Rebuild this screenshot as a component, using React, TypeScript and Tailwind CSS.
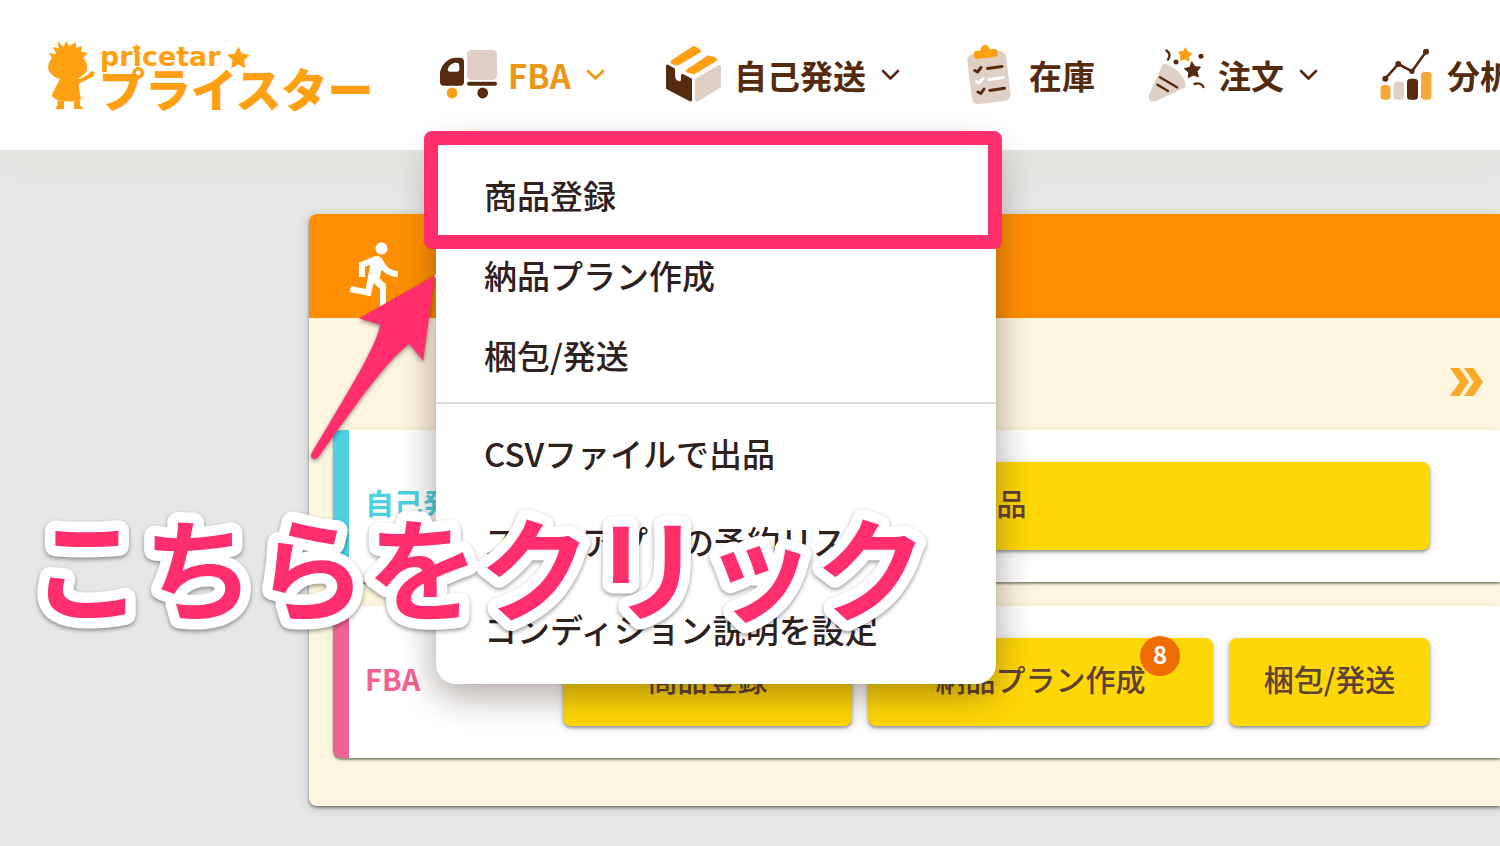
import type { ReactNode } from "react";
import { MdDirectionsRun } from "react-icons/md";

function starPoints(cx: number, cy: number, r: number, inner = 0.45, turn = 0) {
  return Array.from({ length: 10 }, (_, i) => {
    const radius = i % 2 === 0 ? r : r * inner;
    const angle = -Math.PI / 2 + (i * Math.PI) / 5 + turn;
    return `${(cx + radius * Math.cos(angle)).toFixed(2)},${(cy + radius * Math.sin(angle)).toFixed(2)}`;
  }).join(" ");
}

function Logo() {
  return (
    <svg width="330" height="76" viewBox="0 0 330 76" fill="#ff9f12" className="overflow-visible" role="img" aria-label="プライスター">
      <polygon points="4,16 11.7,17.3 7.7,10 13.7,11.3 12.7,4.3 18.3,9.7 21.7,4 24,9.3 30.7,5 31.3,10.7 37,9.3 36,14.7 42.7,15.7 38.3,20.7 41.7,27 4,27 6.7,20.7" />
      <ellipse cx="22.7" cy="30" rx="19.6" ry="13.2" />
      <path d="M15 41H31L35 42 44 37 45.5 34 49.5 35 48.5 39.5 35 46 33.5 48 36 62.5C32 65 20 65 11.5 62.7L15.5 54 12.5 60 12 63 7 59.5 7.5 56 13 46Z" />
      <path d="M12.5 63.5 19 64.3V72H13C9.500 72 10 69.500 12.500 69.300ZM29 64.300 35 63.300V69C38.500 69.500 38.500 72 36 72H29Z" />
      <polygon points={starPoints(91.3, 11.5, 4.8)} />
      <polygon points={starPoints(193.3, 21.5, 12, 0.5)} />
      <text x="55" y="29" fontSize="27" fontWeight="700" fontFamily="DejaVu Sans, sans-serif">pricetar</text>
      <text x="54" y="70" fontSize="46" fontWeight="900" fontFamily="Noto Sans CJK JP, sans-serif">プライスター</text>
    </svg>
  );
}

function TruckIcon() {
  return (
    <svg width="64" height="64" viewBox="-2 -5 64 64" aria-hidden="true">
      <rect x="29" y="2" width="30" height="30" rx="4.500" fill="#e0cfc5" />
      <rect x="29" y="33.700" width="30" height="4" rx="2" fill="#562a0d" />
      <path fillRule="evenodd" fill="#562a0d" d="M2 24C4 16 10 9.700 18 9.700H22A4 4 0 0 1 26 13.700V33.700A4 4 0 0 1 22 37.700H6A4 4 0 0 1 2 33.700ZM9.700 21.500C10 23.500 11 23.700 12 23.700H18.500C20.500 23.700 21.300 23 21.300 21.500V17.500C21.300 15.500 20.500 14.700 18.500 14.700C14 14.700 11 17 9.700 21.500Z" />
      <circle cx="14" cy="45" r="5.400" fill="#ff9f12" />
      <circle cx="44.700" cy="45" r="5.400" fill="#562a0d" />
    </svg>
  );
}

function BoxIcon() {
  return (
    <svg width="64" height="64" viewBox="0 0 64 64" strokeLinejoin="round" strokeWidth="4" aria-hidden="true">
      <g fill="#ff9f12" stroke="#ff9f12">
        <path d="M10.500 19 32 5 37 8 15.300 20.500Z" />
        <path d="M26 27.800 46.500 14.300 53 16.500 32 29.200Z" />
      </g>
      <path fill="#562a0d" stroke="#562a0d" strokeWidth="3" d="M5.500 23 11.500 26.500 11.800 35C12.500 39.500 20 42 20.500 37V32.500L28.500 36.500V57L5.500 45Z" />
      <path fill="#e0cfc5" stroke="#e0cfc5" d="M35 37 57 24V43L35 56.500Z" />
    </svg>
  );
}

function ClipboardIcon() {
  return (
    <svg width="64" height="64" viewBox="0 0 64 64" fill="none" strokeLinecap="round" strokeLinejoin="round" strokeWidth="3" aria-hidden="true">
      <rect x="12.500" y="9.500" width="39" height="50" rx="6" fill="#e0cfc5" transform="rotate(-7 32 34.300)" />
      <g fill="#ff9f12" transform="rotate(-6 28.700 11)">
        <rect x="16.800" y="7" width="24" height="8" rx="3" />
        <circle cx="28.500" cy="6.500" r="4.500" />
      </g>
      <path stroke="#562a0d" d="M30.500 25.400 45 23.400M17.800 27.500 20.500 29 24 24.500M32.800 47.400 47.500 45.300M21 49 23.800 50.500 27 46" />
      <path stroke="#fff" d="M31.800 36.600 46.500 34.500M19 38.700 22 40 26 35.500" />
    </svg>
  );
}

function PartyIcon() {
  return (
    <svg width="60" height="64" viewBox="0 0 60 64" className="overflow-visible" fill="none" strokeLinecap="round" strokeWidth="2.400" aria-hidden="true">
      <path fill="#e0cfc5" d="M12 22.500C13 20 15 20.500 18 22 27 26 34 33.500 35.700 41.500 36 44 35 44.500 33 45.500L6 58C1 60-3 56.500-.500 51Z" />
      <path stroke="#562a0d" d="M10 34.300 27 44.300M7.500 41.800 18 48" />
      <polygon fill="#ff9f12" points={starPoints(35, 12, 7, 0.58, 0.1)} stroke="#ff9f12" strokeWidth="1" strokeLinejoin="round" />
      <polygon fill="#562a0d" points={starPoints(42.7, 27.500, 8.500, 0.52, -0.1)} stroke="#562a0d" strokeWidth="1" strokeLinejoin="round" />
      <circle cx="26" cy="19" r="2.500" fill="#562a0d" />
      <circle cx="51" cy="13.300" r="2.500" fill="#562a0d" />
      <path stroke="#562a0d" d="M16.500 7.500C20 10 20.500 13.500 18 16.500M44.500 41C48.500 39.500 52 41 53.500 44" />
    </svg>
  );
}

function ChartIcon() {
  return (
    <svg width="64" height="64" viewBox="0 0 64 64" aria-hidden="true">
      <rect x="5.500" y="42" width="10" height="14.700" rx="3.500" fill="#f4a93a" />
      <rect x="18.500" y="38.700" width="10.500" height="18" rx="3.500" fill="#e0cfc5" />
      <rect x="32" y="35.700" width="11" height="21" rx="3.500" fill="#562a0d" />
      <rect x="46" y="29" width="10.500" height="27.700" rx="3.500" fill="#f4a93a" />
      <path d="M10.300 35.700 23.300 21 37 28.300 51 8.700" fill="none" stroke="#562a0d" strokeWidth="2.600" strokeLinejoin="round" />
      <g fill="#562a0d">
        <circle cx="10.300" cy="35.700" r="3" />
        <circle cx="23.300" cy="21" r="3" />
        <circle cx="37" cy="28.300" r="2.600" />
        <circle cx="51" cy="8.700" r="3" />
      </g>
    </svg>
  );
}

function Chevron() {
  return (
    <svg width="24" height="24" viewBox="0 0 24 24" fill="none" stroke="currentColor" strokeWidth="2.600" strokeLinecap="round" strokeLinejoin="round" aria-hidden="true" className="ml-3">
      <path d="M5 8 12.500 15.500 20 8" />
    </svg>
  );
}

function NavItem({ icon, label, chevron, active, children }: { icon: ReactNode; label: string; chevron?: boolean; active?: boolean; children?: ReactNode }) {
  return (
    <li className="relative flex shrink-0 items-center">
      <button type="button" className={`flex items-center text-[33px] leading-none font-bold whitespace-nowrap ${active ? "text-[#ec9516]" : "text-[#562a0d]"}`}>
        <span className="mr-2">{icon}</span>
        <span>{label}</span>
        {chevron && <Chevron />}
      </button>
      {children}
    </li>
  );
}

const registerLinks = ["商品登録", "納品プラン作成", "梱包/発送"];
const settingLinks = ["CSVファイルで出品", "スマホアプリの予約リスト", "コンディション説明を設定"];

function FbaMenu() {
  return (
    <div className="absolute top-[140px] left-0 z-20 w-[560px] rounded-[20px] bg-white text-[33px] font-medium text-[#2e211e] shadow-[0_10px_36px_rgba(50,30,20,0.42)]">
      <ul className="border-b-2 border-[#dfdddb] pt-4 pb-[6px]">
        {registerLinks.map((t) => (
          <li key={t}>
            <a href="#" className="flex h-20 items-center px-12">{t}</a>
          </li>
        ))}
      </ul>
      <ul className="pt-[6px] pb-[10px]">
        {settingLinks.map((t) => (
          <li key={t}>
            <a href="#" className="flex h-[88px] items-center px-12">{t}</a>
          </li>
        ))}
      </ul>
    </div>
  );
}

function Task({ label, badge }: { label: string; badge?: number }) {
  return (
    <button type="button" className="relative h-[88px] rounded-lg bg-[#fed706] pb-2 text-[30px] leading-none font-medium whitespace-nowrap text-[#5d4037] shadow-[0_2px_3px_rgba(0,0,0,0.35),0_2px_10px_rgba(0,0,0,0.14)]">
      {label}
      {badge !== undefined && (
        <span className="absolute -top-[2px] right-[33px] flex size-10 items-center justify-center rounded-full bg-[#ef6c00] pb-1 text-2xl leading-none font-bold text-white">
          {badge}
        </span>
      )}
    </button>
  );
}

function Panel({ title, tone, children }: { title: string; tone: "cyan" | "pink"; children: ReactNode }) {
  return (
    <section
      className={`flex items-center rounded-l-lg border-l-[16px] bg-white py-8 pr-[70px] shadow-[0_2px_2px_rgba(0,0,0,0.4),0_1px_8px_rgba(0,0,0,0.08)] ${
        tone === "cyan" ? "border-[#4dd0e1]" : "border-[#f06292]"
      }`}
    >
      <h3 className={`w-[214px] shrink-0 pb-2 pl-4 text-[29px] leading-none font-bold ${tone === "cyan" ? "text-[#4dd0e1]" : "text-[#f06292]"}`}>{title}</h3>
      {children}
    </section>
  );
}

export default function App() {
  return (
    <div className="relative min-h-screen overflow-hidden bg-[#e5e8e7] font-['Noto_Sans_CJK_JP',sans-serif]">
      <header className="relative z-10 flex h-[150px] bg-white pl-[45px] shadow-[0_16px_48px_rgba(225,190,150,0.14)]">
        <a href="#" className="flex shrink-0 items-center">
          <Logo />
        </a>
        <nav className="ml-[61px] flex">
          <ul className="flex gap-[55px]">
            <NavItem icon={<TruckIcon />} label="FBA" chevron active>
              <FbaMenu />
            </NavItem>
            <NavItem icon={<BoxIcon />} label="自己発送" chevron />
            <NavItem icon={<ClipboardIcon />} label="在庫" />
            <NavItem icon={<PartyIcon />} label="注文" chevron />
            <NavItem icon={<ChartIcon />} label="分析" chevron />
          </ul>
        </nav>
      </header>

      <main className="pt-16 pb-10 pl-[309px]">
        <div className="rounded-l-lg bg-[#fef6de] pb-12 shadow-[0_2px_3px_rgba(0,0,0,0.4),0_2px_12px_rgba(0,0,0,0.16)]">
          <div className="flex h-[104px] items-end gap-5 rounded-tl-lg bg-[#ff8f00] pb-2 pl-8 text-white">
            <MdDirectionsRun size={72} aria-hidden="true" />
            <h2 className="pb-3 text-[40px] leading-none font-bold">今</h2>
          </div>
          <div className="flex h-28 items-center justify-end pt-4 pr-4">
            <svg width="34" height="28" viewBox="0 0 34 28" fill="#fba928" aria-hidden="true">
              <path d="M0 0H9.500L19 14 9.500 28H0L9.700 14ZM14 0H23.500L33 14 23.500 28H14L23.700 14Z" />
            </svg>
          </div>
          <div className="flex flex-col gap-6 pl-6">
            <Panel title="自己発送" tone="cyan">
              <div className="grid grow">
                <Task label="出品" />
              </div>
            </Panel>
            <Panel title="FBA" tone="pink">
              <div className="grid grow grid-cols-[289fr_345fr_201fr] gap-4">
                <Task label="商品登録" />
                <Task label="納品プラン作成" badge={8} />
                <Task label="梱包/発送" />
              </div>
            </Panel>
          </div>
        </div>
      </main>

      <div className="pointer-events-none absolute top-[131px] left-[424px] z-30 h-[118px] w-[578px] rounded-lg border-[14px] border-[#ff2e6d]" />
      <svg width="140" height="200" viewBox="300 270 140 200" aria-hidden="true" className="pointer-events-none absolute top-[270px] left-[300px] z-30 overflow-visible drop-shadow-[0_2px_2px_rgba(0,0,0,0.4)]">
        <path fill="#ff2e6d" d="M434.500 275.500 359 318.500 380 324.700C378 345 340 405 311.500 453.500C309 458.500 315 461 318.500 457C350 413 385 362 409.300 344L423.300 361Z" />
      </svg>
      <svg width="920" height="140" viewBox="0 0 920 140" className="pointer-events-none absolute top-[500px] left-[20px] z-30 overflow-visible drop-shadow-[0_2px_2px_rgba(0,0,0,0.4)]">
        <text
          x="11"
          y="113"
          fontSize="112"
          fontWeight="700"
          fill="#ff2e6d"
          stroke="#fff"
          strokeWidth="21"
          strokeLinejoin="round"
          paintOrder="stroke"
        >
          こちらをクリック
        </text>
      </svg>
    </div>
  );
}
